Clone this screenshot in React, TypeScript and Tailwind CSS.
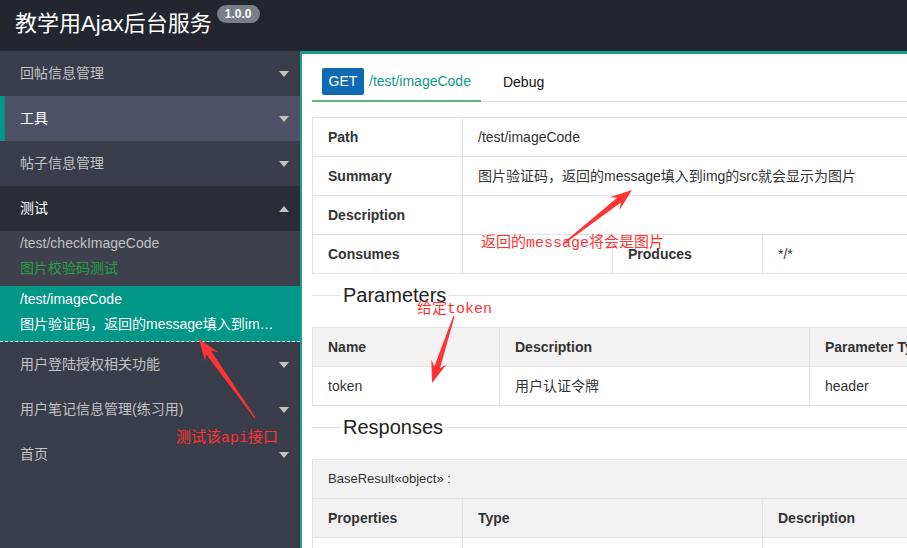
import React from 'react';

function Caret({ up }: { up?: boolean }) {
  if (up) {
    return <span className="h-0 w-0 border-x-[5px] border-b-[6px] border-x-transparent border-b-[#c2c2c2]" />;
  }
  return <span className="h-0 w-0 border-x-[5px] border-t-[6px] border-x-transparent border-t-[#c2c2c2]" />;
}

function MenuRow({ label, active, open, dark }: { label: string; active?: boolean; open?: boolean; dark?: boolean }) {
  return (
    <div
      className={
        'flex h-[45px] items-center justify-between pr-[11px] text-[14px] ' +
        (active
          ? 'border-l-[5px] border-[#009688] bg-[#4f5266] pl-[15px] text-white'
          : dark
          ? 'bg-[#2a2d36] pl-5 text-white'
          : 'pl-5 text-[#c2c2c2]')
      }
    >
      <span>{label}</span>
      <Caret up={open} />
    </div>
  );
}

// annotation arrow, tapered shaft + swept head
function arrowPoints(x1: number, y1: number, x2: number, y2: number) {
  const dx = x2 - x1;
  const dy = y2 - y1;
  const len = Math.hypot(dx, dy);
  const ux = dx / len;
  const uy = dy / len;
  const nx = -uy;
  const ny = ux;
  const head = 22;
  const pts: [number, number][] = [
    [x1 + nx * 0.6, y1 + ny * 0.6],
    [x2 - ux * head * 0.75 + nx * 3, y2 - uy * head * 0.75 + ny * 3],
    [x2 - ux * head + nx * 8, y2 - uy * head + ny * 8],
    [x2, y2],
    [x2 - ux * head - nx * 8, y2 - uy * head - ny * 8],
    [x2 - ux * head * 0.75 - nx * 3, y2 - uy * head * 0.75 - ny * 3],
    [x1 - nx * 0.6, y1 - ny * 0.6],
  ];
  return pts.map(p => p[0].toFixed(1) + ',' + p[1].toFixed(1)).join(' ');
}

function Legend({ title }: { title: string }) {
  return (
    <div className="mt-[10px] mb-[21px] flex h-[22px] items-center">
      <span className="h-px w-[28px] bg-[#e2e2e2]" />
      <span className="px-[3px] text-[20px] leading-[22px] text-[#222]">{title}</span>
      <span className="h-px flex-1 bg-[#e2e2e2]" />
    </div>
  );
}

const td = 'h-[39px] border border-[#e2e2e2] px-[15px] align-middle';

export default function App() {
  return (
    <div className="relative h-[548px] w-[907px] overflow-hidden bg-white font-['Liberation_Sans','Noto_Sans_CJK_SC',sans-serif] text-[#333]">
      <header className="flex h-[51px] items-start bg-[#23262e] pl-[15px]">
        <h1 className="mt-[10px] text-[22px] leading-[28px] text-white">教学用Ajax后台服务</h1>
        <span className="ml-[5px] mt-[5px] h-[18px] rounded-full bg-[#7a7e86] px-[8px] text-[12px] font-bold leading-[18px] text-white">
          1.0.0
        </span>
      </header>

      <div className="flex h-[497px]">
        <aside className="w-[300px] shrink-0 bg-[#393d49]">
          <MenuRow label="回帖信息管理" />
          <MenuRow label="工具" active />
          <MenuRow label="帖子信息管理" />
          <MenuRow label="测试" dark open />
          <div className="bg-[#3e414b] text-[14px] leading-[25px]">
            <div className="h-[55px] pl-5">
              <div className="text-[#c2c2c2]">/test/checkImageCode</div>
              <div className="text-[#22a04b]">图片校验码测试</div>
            </div>
            <div className="h-[56px] border-b border-dashed border-white bg-[#009688] pl-5 pt-px text-white">
              <div>/test/imageCode</div>
              <div className="w-[258px] truncate">图片验证码，返回的message填入到img的src就会显示为图片</div>
            </div>
          </div>
          <MenuRow label="用户登陆授权相关功能" />
          <MenuRow label="用户笔记信息管理(练习用)" />
          <MenuRow label="首页" />
        </aside>

        <main className="min-w-0 flex-1 overflow-hidden border-l-2 border-t-[3px] border-[#1aa094] pl-[10px] text-[14px]">
          <div className="flex h-[48px] w-[900px] border-b border-[#e2e2e2]">
            <div className="mb-[-1px] flex h-[48px] items-start gap-[5px] border-b-2 border-[#5fb878] px-[10px] pt-[14px]">
              <span className="flex h-[27px] w-[42px] items-center justify-center rounded-[2px] bg-[#0f6ab4] text-[14px] text-white">GET</span>
              <span className="leading-[27px] text-[#0f9a8a]">/test/imageCode</span>
            </div>
            <div className="px-[22px] pt-[14px] leading-[28px] text-[#111]">Debug</div>
          </div>

          <table className="mt-[15px] w-[900px] border-collapse">
            <tbody>
              <tr>
                <td className={td + ' w-[150px] font-bold'}>Path</td>
                <td className={td} colSpan={3}>/test/imageCode</td>
              </tr>
              <tr>
                <td className={td + ' font-bold'}>Summary</td>
                <td className={td} colSpan={3}>图片验证码，返回的message填入到img的src就会显示为图片</td>
              </tr>
              <tr>
                <td className={td + ' font-bold'}>Description</td>
                <td className={td} colSpan={3}></td>
              </tr>
              <tr>
                <td className={td + ' font-bold'}>Consumes</td>
                <td className={td + ' w-[150px]'}></td>
                <td className={td + ' w-[150px] font-bold'}>Produces</td>
                <td className={td}>*/*</td>
              </tr>
            </tbody>
          </table>

          <Legend title="Parameters" />

          <table className="w-[900px] border-collapse">
            <tbody>
              <tr className="bg-[#f2f2f2] font-bold">
                <td className={td + ' w-[187px]'}>Name</td>
                <td className={td + ' w-[310px]'}>Description</td>
                <td className={td}>Parameter Type</td>
              </tr>
              <tr>
                <td className={td}>token</td>
                <td className={td}>用户认证令牌</td>
                <td className={td}>header</td>
              </tr>
            </tbody>
          </table>

          <Legend title="Responses" />

          <table className="w-[900px] border-collapse">
            <tbody>
              <tr className="bg-[#f2f2f2]">
                <td className={td + ' h-[38px] text-[13px]'} colSpan={3}>BaseResult«object» :</td>
              </tr>
              <tr className="bg-[#f2f2f2] font-bold">
                <td className={td + ' w-[150px]'}>Properties</td>
                <td className={td + ' w-[300px]'}>Type</td>
                <td className={td}>Description</td>
              </tr>
              <tr>
                <td className={td}></td>
                <td className={td}></td>
                <td className={td}></td>
              </tr>
            </tbody>
          </table>
        </main>
      </div>

      {/* red annotations drawn over the screenshot */}
      <svg className="pointer-events-none absolute left-0 top-0" width="907" height="548">
        <polygon points={arrowPoints(563, 244, 632, 190)} fill="#ff3333" />
        <polygon points={arrowPoints(454, 316, 432, 383)} fill="#ff3333" />
        <polygon points={arrowPoints(255, 418, 199, 339)} fill="#ff3333" />
      </svg>
      <div className="pointer-events-none absolute left-[481px] top-[234px] font-['Liberation_Mono','Noto_Sans_CJK_SC',monospace] text-[15px] leading-[20px] text-[#ff3333]">
        返回的message将会是图片
      </div>
      <div className="pointer-events-none absolute left-[417px] top-[300px] font-['Liberation_Mono','Noto_Sans_CJK_SC',monospace] text-[15px] leading-[20px] text-[#ff3333]">
        给定token
      </div>
      <div className="pointer-events-none absolute left-[176px] top-[429px] font-['Liberation_Mono','Noto_Sans_CJK_SC',monospace] text-[15px] leading-[20px] text-[#ff3333]">
        测试该api接口
      </div>
    </div>
  );
}
